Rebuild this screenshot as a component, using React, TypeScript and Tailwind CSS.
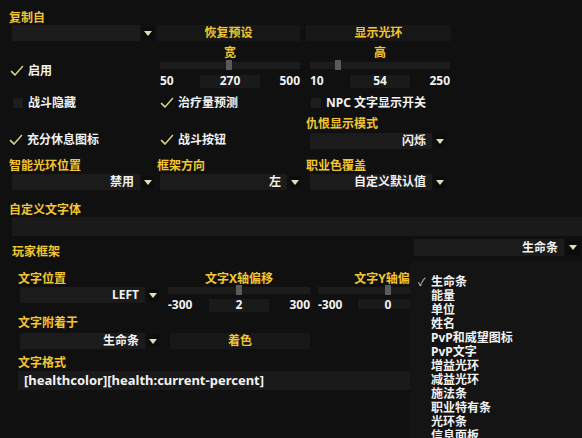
import React from 'react'

const shadow = '[text-shadow:1px_1px_1px_#000,0_0_2px_#000]'

function Label({ children, className = '' }: { children: React.ReactNode; className?: string }) {
  return (
    <div className={`h-[14px] leading-[14px] text-[12px] font-bold text-[#f2c630] whitespace-nowrap ${shadow} ${className}`}>
      {children}
    </div>
  )
}

function Arrow({ open = false }: { open?: boolean }) {
  return (
    <div
      className={`flex items-center justify-center ${
        open ? 'w-[14px] h-[14px] border border-[#4b5aa0] bg-[#0b0b0b]' : 'w-[12px] h-[12px] bg-[#0c0c0c]'
      }`}
    >
      <svg width="8" height="5" viewBox="0 0 8 5">
        <polygon points="0,0 8,0 4,5" fill="#e4dcb8" />
      </svg>
    </div>
  )
}

function Dropdown({
  value,
  boxClass,
  open = false,
}: {
  value: string
  boxClass: string
  open?: boolean
}) {
  return (
    <div className="flex items-center">
      <div className={`bg-[#1b1b1b] flex items-center justify-end pr-[6px] text-[12px] font-bold text-[#f2f2f2] whitespace-nowrap ${shadow} ${boxClass}`}>
        {value}
      </div>
      <div className="ml-[2px]">
        <Arrow open={open} />
      </div>
    </div>
  )
}

function Button({ children, className = '' }: { children: React.ReactNode; className?: string }) {
  return (
    <div className={`h-[16px] bg-[#171717] flex items-center justify-center text-[12px] font-bold text-[#f2c630] ${shadow} ${className}`}>
      {children}
    </div>
  )
}

function Check({ label, checked }: { label: string; checked: boolean }) {
  return (
    <div className="flex items-center h-[14px] text-[12px] font-bold text-[#f2f2f2] whitespace-nowrap">
      {checked ? (
        <svg width="14" height="12" viewBox="0 0 14 12" className="mr-[4px]">
          <path d="M1.5 6.5 L5 10 L12.5 1.5" stroke="#000" strokeWidth="3.2" fill="none" strokeLinecap="round" />
          <path d="M1.5 6.5 L5 10 L12.5 1.5" stroke="#cfc57c" strokeWidth="1.8" fill="none" strokeLinecap="round" />
        </svg>
      ) : (
        <div className="w-[10px] h-[10px] bg-[#1d1d1d] mr-[5px]" />
      )}
      <span className={shadow}>{label}</span>
    </div>
  )
}

function Slider({
  label,
  min,
  max,
  value,
  width,
  trackGap = 'mt-[2px]',
  valuesGap = 'mt-[3px]',
}: {
  label: string
  min: number
  max: number
  value: number
  width: number
  trackGap?: string
  valuesGap?: string
}) {
  const pos = ((value - min) / (max - min)) * (width - 6)
  return (
    <div style={{ width }}>
      <Label className="text-center">{label}</Label>
      <div className={`relative h-[7px] bg-[#1c1c1c] border-t border-[#262626] ${trackGap}`}>
        <div className="absolute top-[-2px] w-[6px] h-[10px] bg-[#5a5a5a]" style={{ left: pos }} />
      </div>
      <div className={`grid grid-cols-[1fr_60px_1fr] items-center h-[13px] text-[12px] font-bold text-[#f2f2f2] ${shadow} ${valuesGap}`}>
        <span className="justify-self-start">{min}</span>
        <div className="h-[13px] bg-[#1a1a1a] flex items-center justify-center">{value}</div>
        <span className="justify-self-end">{max}</span>
      </div>
    </div>
  )
}

const menuItems = [
  '生命条',
  '能量',
  '单位',
  '姓名',
  'PvP和威望图标',
  'PvP文字',
  '增益光环',
  '减益光环',
  '施法条',
  '职业特有条',
  '光环条',
  '信息面板',
]

export default function App() {
  return (
    <div className="relative w-[582px] h-[438px] overflow-hidden bg-[#101010] font-['Noto_Sans','Noto_Sans_CJK_SC',sans-serif]">
      {/* Row 1 */}
      <div className="flex items-end mt-[11px]">
        <div className="w-[157px]">
          <Label className="pl-[9px]">复制自</Label>
          <div className="pl-[12px] h-[16px] flex items-center">
            <Dropdown value="" boxClass="w-[128px] h-[16px]" />
          </div>
        </div>
        <Button className="w-[143px]">恢复预设</Button>
        <div className="w-[6px]" />
        <Button className="w-[145px]">显示光环</Button>
      </div>

      {/* Row 2 */}
      <div className="flex mt-[5px]">
        <div className="w-[157px] pl-[10px] pt-[18px]">
          <Check label="启用" checked />
        </div>
        <div className="w-[153px] pl-[3px]">
          <Slider label="宽" min={50} max={500} value={270} width={140} />
        </div>
        <Slider label="高" min={10} max={250} value={54} width={140} />
      </div>

      {/* Row 3 */}
      <div className="flex mt-[11px]">
        <div className="w-[157px] pl-[13px]">
          <Check label="战斗隐藏" checked={false} />
        </div>
        <div className="w-[149px] pl-[3px]">
          <Check label="治疗量预测" checked />
        </div>
        <div className="pl-[5px]">
          <Check label="NPC 文字显示开关" checked={false} />
        </div>
      </div>

      {/* Row 4 */}
      <div className="flex mt-[7px]">
        <div className="w-[157px] pl-[9px] pt-[16px]">
          <Check label="充分休息图标" checked />
        </div>
        <div className="w-[149px] pl-[3px] pt-[16px]">
          <Check label="战斗按钮" checked />
        </div>
        <div>
          <Label>仇恨显示模式</Label>
          <div className="ml-[4px] mt-[2px]">
            <Dropdown value="闪烁" boxClass="w-[122px] h-[16px]" />
          </div>
        </div>
      </div>

      {/* Row 5 */}
      <div className="flex mt-[10px]">
        <div className="w-[157px]">
          <Label className="pl-[9px]">智能光环位置</Label>
          <div className="ml-[12px] mt-[1px]">
            <Dropdown value="禁用" boxClass="w-[128px] h-[16px]" />
          </div>
        </div>
        <div className="w-[149px]">
          <Label>框架方向</Label>
          <div className="ml-[3px] mt-[1px]">
            <Dropdown value="左" boxClass="w-[127px] h-[16px]" />
          </div>
        </div>
        <div>
          <Label>职业色覆盖</Label>
          <div className="ml-[4px] mt-[1px]">
            <Dropdown value="自定义默认值" boxClass="w-[122px] h-[16px]" />
          </div>
        </div>
      </div>

      {/* Row 6 */}
      <div className="mt-[13px]">
        <Label className="pl-[9px]">自定义文字体</Label>
        <div className="ml-[12px] h-[19px] bg-[#1a1a1a]" />
      </div>

      {/* Row 7 */}
      <div className="flex mt-[3px] h-[18px]">
        <Label className="pl-[12px] mt-[6px]">玩家框架</Label>
        <div className="ml-auto mr-[2px]">
          <Dropdown value="生命条" boxClass="w-[150px] h-[17px]" open />
        </div>
      </div>

      {/* Row 8 */}
      <div className="flex mt-[15px]">
        <div className="w-[168px]">
          <Label className="pl-[18px]">文字位置</Label>
          <div className="ml-[20px] mt-[1px]">
            <Dropdown value="LEFT" boxClass="w-[125px] h-[16px]" />
          </div>
        </div>
        <Slider label="文字X轴偏移" min={-300} max={300} value={2} width={142} trackGap="mt-[1px]" valuesGap="mt-[2px]" />
        <div className="ml-[8px] w-[92px] overflow-hidden">
          <Slider label="文字Y轴偏移" min={-300} max={300} value={0} width={140} trackGap="mt-[1px]" valuesGap="mt-[2px]" />
        </div>
      </div>

      {/* Row 9 */}
      <div className="flex mt-[7px]">
        <div className="w-[168px]">
          <Label className="pl-[18px]">文字附着于</Label>
          <div className="ml-[20px] mt-[3px]">
            <Dropdown value="生命条" boxClass="w-[125px] h-[16px]" />
          </div>
        </div>
        <Button className="w-[140px] ml-[2px] mt-[17px]">着色</Button>
      </div>

      {/* Row 10 */}
      <div className="mt-[7px]">
        <Label className="pl-[18px]">文字格式</Label>
        <div className={`ml-[18px] mt-[1px] w-[392px] h-[19px] bg-[#1a1a1a] flex items-center pl-[6px] text-[13px] font-bold text-[#f2f2f2] ${shadow}`}>
          [healthcolor][health:current-percent]
        </div>
      </div>

      {/* Open dropdown menu */}
      <div className="absolute left-[410px] top-[261px] right-0 bottom-0 bg-[#141414] border-l border-[#0a0a0a] pt-[14px] pl-[8px]">
        {menuItems.map((item, i) => (
          <div key={item} className={`flex h-[14px] leading-[14px] text-[12px] font-bold text-[#f2f2f2] whitespace-nowrap ${shadow}`}>
            <span className="w-[13px] text-[11px] font-normal text-[#cfcfcf]">{i === 0 ? '✓' : ''}</span>
            <span>{item}</span>
          </div>
        ))}
      </div>
    </div>
  )
}
